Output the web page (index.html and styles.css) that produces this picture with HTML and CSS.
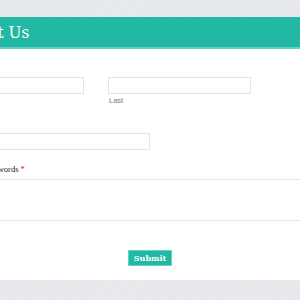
FILE: index.html
```html
<!DOCTYPE html>
<html>
<head>
<meta charset="utf-8">
<link rel="stylesheet" href="styles.css">
</head>
<body>
<div class="page">
  <div class="card">
    <div class="header"><h1 class="title">Contact Us</h1></div>
    <form class="form">
      <div class="field">
        <div class="label">Name <span class="req">*</span></div>
        <div class="row">
          <div class="sub"><div class="input"></div><div class="hint">First</div></div>
          <div class="sub"><div class="input"></div><div class="hint">Last</div></div>
        </div>
      </div>
      <div class="field email">
        <div class="label">Email <span class="req">*</span></div>
        <div class="input wide"></div>
      </div>
      <div class="field words">
        <div class="label words-label">In your own words <span class="req">*</span></div>
        <div class="textarea"></div>
      </div>
      <div class="actions"><button type="button" class="submit">Submit</button></div>
    </form>
  </div>
</div>
</body>
</html>
```
FILE: styles.css
```css
html, body { margin: 0; padding: 0; }
body {
  width: 300px;
  height: 300px;
  overflow: hidden;
  background: #e4e6ea repeating-linear-gradient(135deg, #e1e4e8 0 1px, #e9ebee 1px 3px);
  font-family: "DejaVu Serif", serif;
}
.page {
  padding-top: 17px;
  margin-left: -59px;
  width: 400px;
}
.card { background: #fff; height: 263px; }
.header {
  background: #22b8a3;
  height: 30px;
  border-bottom: 2px solid #5fd4c3;
  display: flex;
  align-items: center;
}
.title {
  margin: 0 0 0 2px;
  color: #fff;
  font-family: "DejaVu Serif", serif;
  font-stretch: condensed;
  font-weight: normal;
  font-size: 17px;
  letter-spacing: 0;
}
.form { padding-top: 14px; display: flex; flex-direction: column; }
.field { display: flex; flex-direction: column; }
.label { font-family: "Liberation Serif", serif; font-size: 8.5px; color: #222; height: 14px; line-height: 14px; }
.words-label { padding-left: 13px; }
.req { color: #e02424; }
.row { display: flex; gap: 24px; }
.sub { display: flex; flex-direction: column; }
.input {
  width: 141px;
  height: 15px;
  border: 1px solid #e4e4e4;
  background: #fff;
}
.input.wide { width: 207px; }
.hint {
  font-family: "Liberation Sans", sans-serif;
  font-size: 7.5px;
  color: #777;
  margin-top: 3px;
  line-height: 8px;
  padding-left: 1px;
}
.field.email { margin-top: 14px; }
.field.words { margin-top: 12px; }
.textarea {
  height: 40px;
  border-top: 1px solid #e4e4e4;
  border-bottom: 1px solid #e4e4e4;
  margin-top: 3px;
}
.actions { display: flex; justify-content: flex-start; padding-left: 187px; margin-top: 29px; }
.submit {
  font-family: "DejaVu Serif", serif;
  font-weight: bold;
  font-size: 8px;
  color: #fff;
  background: #22b8a3;
  border: 1px solid #5fd4c3;
  width: 44px;
  height: 16px;
  padding: 0;
}
```
